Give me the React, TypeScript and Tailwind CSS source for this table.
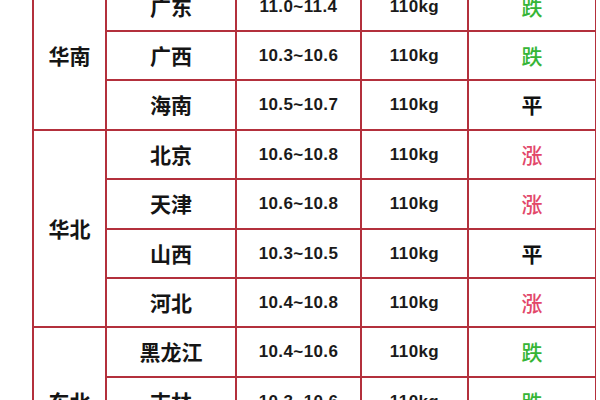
import { Fragment } from "react";

const regions = [
  {
    name: "华南",
    rows: [
      { city: "广东", price: "11.0~11.4", weight: "110kg", trend: "跌" },
      { city: "广西", price: "10.3~10.6", weight: "110kg", trend: "跌" },
      { city: "海南", price: "10.5~10.7", weight: "110kg", trend: "平" },
    ],
  },
  {
    name: "华北",
    rows: [
      { city: "北京", price: "10.6~10.8", weight: "110kg", trend: "涨" },
      { city: "天津", price: "10.6~10.8", weight: "110kg", trend: "涨" },
      { city: "山西", price: "10.3~10.5", weight: "110kg", trend: "平" },
      { city: "河北", price: "10.4~10.8", weight: "110kg", trend: "涨" },
    ],
  },
  {
    name: "东北",
    rows: [
      { city: "黑龙江", price: "10.4~10.6", weight: "110kg", trend: "跌" },
      { city: "吉林", price: "10.3~10.6", weight: "110kg", trend: "跌" },
      { city: "辽宁", price: "10.3~10.6", weight: "110kg", trend: "跌" },
    ],
  },
];

const cjk = "font-['Noto_Sans_CJK_SC',sans-serif]";
const num = "font-['Liberation_Sans',Arial,sans-serif]";

function trendClass(t: string) {
  if (t === "涨") return "text-[#e2476a] font-medium";
  if (t === "跌") return "text-[#36b536] font-medium";
  return "text-[#111] font-bold";
}

export default function App() {
  return (
    <div className="h-[400px] w-[600px] overflow-hidden bg-white">
      <div className="-mt-[19.4px] ml-[32px] grid w-[564px] auto-rows-[47.4px] grid-cols-[71px_128px_123px_105px_126px] gap-[2px] border-2 border-[#b3303c] bg-[#b3303c]">
        {regions.map((r) => (
          <Fragment key={r.name}>
            <div
              className={`col-start-1 flex items-center justify-center bg-white text-[21px] font-bold text-[#151515] ${cjk} ${
                r.rows.length === 4 ? "row-span-4" : "row-span-3"
              }`}
            >
              {r.name}
            </div>
            {r.rows.map((row) => (
              <Fragment key={row.city}>
                <div className={`col-start-2 flex items-center justify-center bg-white text-[21px] font-bold text-[#151515] ${cjk}`}>
                  {row.city}
                </div>
                <div className={`flex items-center justify-center bg-white text-[17px] font-bold tracking-[0.4px] text-[#1a1a1a] ${num}`}>
                  {row.price}
                </div>
                <div className={`flex items-center justify-center bg-white text-[17px] font-bold tracking-[0.4px] text-[#1a1a1a] ${num}`}>
                  {row.weight}
                </div>
                <div className={`flex items-center justify-center bg-white text-[21px] ${cjk} ${trendClass(row.trend)}`}>
                  {row.trend}
                </div>
              </Fragment>
            ))}
          </Fragment>
        ))}
      </div>
    </div>
  );
}
